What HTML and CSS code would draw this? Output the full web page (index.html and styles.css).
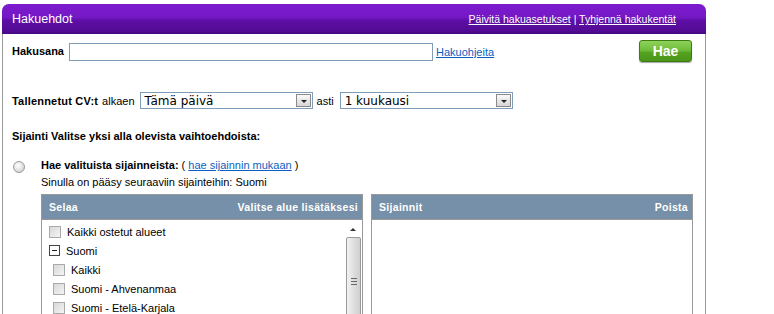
FILE: index.html
```html
<!DOCTYPE html>
<html lang="fi">
<head>
    <meta charset="UTF-8">
    <title>Hakuehdot</title>
    <link rel="stylesheet" href="styles.css">
</head>
<body>
    <div class="panel">
        <div class="panel-head">
            <span class="panel-title">Hakuehdot</span>
            <span class="head-links"><a href="#">Päivitä hakuasetukset</a> | <a href="#">Tyhjennä hakukentät</a></span>
        </div>

        <div class="panel-body">
            <div class="row row-search">
                <label class="lbl" for="q">Hakusana</label>
                <input type="text" id="q" class="text-input">
                <a href="#" class="link">Hakuohjeita</a>
                <button type="button" class="btn-hae">Hae</button>
            </div>

            <div class="row row-dates">
                <span class="lbl">Tallennetut CV:t</span>
                <span class="small from">alkaen</span>
                <div class="select"><span>Tämä päivä</span><i class="arrow"></i></div>
                <span class="small to">asti</span>
                <div class="select"><span>1 kuukausi</span><i class="arrow"></i></div>
            </div>

            <p class="lbl section-title">Sijainti Valitse yksi alla olevista vaihtoehdoista:</p>

            <div class="option">
                <span class="radio"></span>
                <div class="option-body">
                    <p><b class="lbl">Hae valituista sijainneista:</b> ( <a href="#" class="link">hae sijainnin mukaan</a> )</p>
                    <p class="access">Sinulla on pääsy seuraaviin sijainteihin: Suomi</p>

                    <div class="boxes">
                        <div class="box">
                            <div class="box-head"><span>Selaa</span><span>Valitse alue lisätäksesi</span></div>
                            <div class="box-body">
                                <ul class="tree">
                                    <li><span class="cb"></span>Kaikki ostetut alueet</li>
                                    <li><span class="minus"></span>Suomi</li>
                                    <li class="sub"><span class="cb"></span>Kaikki</li>
                                    <li class="sub"><span class="cb"></span>Suomi - Ahvenanmaa</li>
                                    <li class="sub"><span class="cb"></span>Suomi - Etelä-Karjala</li>
                                </ul>
                                <div class="scrollbar">
                                    <div class="scroll-up"></div>
                                    <div class="scroll-thumb"><i></i></div>
                                </div>
                            </div>
                        </div>
                        <div class="box">
                            <div class="box-head"><span>Sijainnit</span><span>Poista</span></div>
                            <div class="box-body"></div>
                        </div>
                    </div>
                </div>
            </div>
        </div>
    </div>
</body>
</html>
```

FILE: styles.css
```css
* {
    box-sizing: border-box;
    margin: 0;
    padding: 0;
}

body {
    font-family: 'Liberation Sans', Arial, sans-serif;
    font-size: 11px;
    color: #000;
    background: #fff;
    height: 314px;
    overflow: hidden;
}

.panel {
    width: 704px;
    margin: 4px 0 0 2px;
    border-left: 1px solid #999;
    border-right: 1px solid #999;
    border-radius: 7px 7px 0 0;
}

.panel-head {
    height: 30px;
    margin: 0 -1px;
    padding: 0 10px;
    display: flex;
    align-items: center;
    justify-content: space-between;
    color: #fff;
    border-radius: 7px 7px 0 0;
    background: linear-gradient(#7d1bcf 0%, #7418c4 45%, #5e0ea6 55%, #520b93 90%, #45077d 100%);
}

.panel-title {
    font-size: 12.5px;
}

.head-links {
    font-size: 10.5px;
    margin-right: 20px;
}

.head-links a {
    color: #fff;
}

.panel-body {
    padding: 6px 13px 0 9px;
}

.lbl {
    font-weight: bold;
}

.link {
    color: #0b5fbf;
}

.row {
    display: flex;
    align-items: center;
}

.row-search {
    height: 22px;
}

.text-input {
    width: 364px;
    height: 18px;
    margin: 2px 3px 0 5px;
    border: 1px solid #7f9db9;
}

.row-search .link {
    margin-top: 2px;
}

.btn-hae {
    margin-left: auto;
    width: 53px;
    height: 22px;
    border: 1px solid #3c7a12;
    border-radius: 3px;
    color: #fff;
    font-family: 'Liberation Sans', Arial, sans-serif;
    font-size: 14px;
    font-weight: bold;
    background: linear-gradient(#8ed25a 0%, #6cbb38 50%, #55a322 55%, #4b9619 100%);
    box-shadow: 0 1px 1px rgba(0, 0, 0, 0.35);
}

.row-dates {
    margin-top: 30px;
    height: 17px;
}

.row-dates .lbl {
    letter-spacing: 0.2px;
}

.from {
    margin: 0 5px 0 4px;
}

.to {
    margin: 0 6px 0 4px;
}

.select {
    width: 173px;
    height: 17px;
    border: 1px solid #7f9db9;
    display: flex;
    align-items: center;
    justify-content: space-between;
    padding: 0 1px 0 4px;
    font-family: 'DejaVu Sans', Verdana, sans-serif;
    font-size: 12px;
}

.arrow {
    width: 15px;
    height: 13px;
    border: 1px solid #8a8a8a;
    background: linear-gradient(#fafafa, #d6d6d6);
    position: relative;
}

.arrow::after {
    content: '';
    position: absolute;
    left: 4px;
    top: 5px;
    border-left: 3px solid transparent;
    border-right: 3px solid transparent;
    border-top: 3px solid #222;
}

.section-title {
    margin-top: 21px;
}

.option {
    display: flex;
    margin-top: 15px;
}

.radio {
    width: 12px;
    height: 12px;
    margin: 4px 16px 0 1px;
    border-radius: 50%;
    border: 1px solid #9a9a9a;
    background: radial-gradient(circle at 40% 35%, #fff 0%, #e4e4e4 50%, #c4c4c4 100%);
    flex-shrink: 0;
}

.option-body {
    flex: 1;
}

.option-body p {
    line-height: 17px;
}

.boxes {
    display: flex;
    gap: 8px;
    margin-top: 3px;
}

.box {
    width: 322px;
    height: 140px;
    border: 1px solid #999;
}

.box-head {
    height: 25px;
    padding: 0 4px 0 7px;
    display: flex;
    align-items: center;
    justify-content: space-between;
    background: #7590a8;
    color: #fff;
    font-weight: bold;
    font-size: 10.5px;
    letter-spacing: 0.3px;
    border-bottom: 1px solid #999;
}

.box-body {
    display: flex;
    height: 115px;
}

.tree {
    list-style: none;
    flex: 1;
    padding: 2px 0 0 7px;
}

.tree li {
    display: flex;
    align-items: center;
    height: 19px;
}

.tree li.sub {
    padding-left: 4px;
}

.cb {
    width: 12px;
    height: 12px;
    margin-right: 6px;
    border: 1px solid #aaa;
    background: linear-gradient(135deg, #d8d8d8, #f4f4f4);
}

.minus {
    width: 11px;
    height: 11px;
    margin-right: 6px;
    border: 1px solid #444;
    position: relative;
}

.minus::after {
    content: '';
    position: absolute;
    left: 2px;
    top: 4px;
    width: 5px;
    height: 1px;
    background: #222;
}

.scrollbar {
    width: 16px;
    padding: 4px 1px 0 0;
}

.scroll-up {
    height: 13px;
    position: relative;
}

.scroll-up::after {
    content: '';
    position: absolute;
    left: 4px;
    top: 4px;
    border-left: 3px solid transparent;
    border-right: 3px solid transparent;
    border-bottom: 3px solid #333;
}

.scroll-thumb {
    height: 100px;
    border: 1px solid #9a9a9a;
    border-radius: 2px;
    background: linear-gradient(90deg, #f2f2f2, #dcdcdc 60%, #cfcfcf);
    position: relative;
}

.scroll-thumb i {
    position: absolute;
    left: 4px;
    top: 40px;
    width: 6px;
    height: 7px;
    border-top: 1px solid #666;
    border-bottom: 1px solid #666;
}

.scroll-thumb i::after {
    content: '';
    position: absolute;
    left: 0;
    top: 2px;
    width: 6px;
    height: 1px;
    background: #666;
}
```
